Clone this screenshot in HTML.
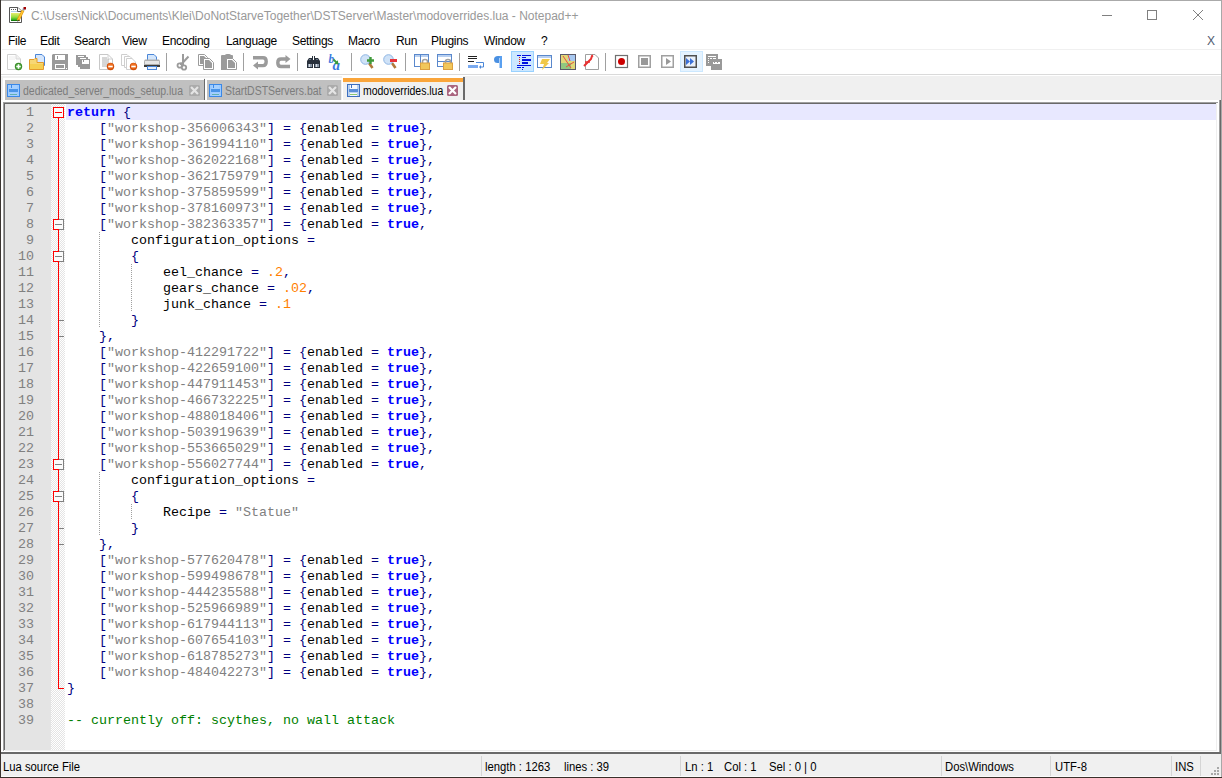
<!DOCTYPE html>
<html><head><meta charset="utf-8">
<style>
*{margin:0;padding:0;box-sizing:border-box}
html,body{width:1222px;height:778px;overflow:hidden;background:#fff;font-family:"Liberation Sans",sans-serif}
.a{position:absolute}
#win{position:absolute;left:0;top:0;width:1222px;height:778px;background:#fff}
.title{left:31px;top:9px;font-size:12px;color:#999;white-space:nowrap}
.menu{top:34px;font-size:12px;color:#000;white-space:nowrap;letter-spacing:-0.3px}
#tb{left:1px;top:50px;width:1220px;height:25px;background:#fff;border-bottom:1px solid #dadada}
#tabbar{left:1px;top:76px;width:1220px;height:24px;background:#f0f0f0}
.tabt{font-size:12px;white-space:nowrap;transform:scaleX(0.872);transform-origin:0 0;line-height:14px}
#ed{left:1px;top:100px;width:1220px;height:654px;background:#fff}
#edf{left:3px;top:102px;width:1217px;height:652px;border-top:2px solid #6d6d6d;border-left:2px solid #6d6d6d;border-bottom:2px solid #6d6d6d;border-right:0}
#lnm{left:5px;top:104px;width:46px;height:646px;background:#e4e4e4}
#fold{left:51px;top:104px;width:14px;height:646px;background:repeating-conic-gradient(#e8e8e8 0 25%,#fff 0 50%) 0 0/2px 2px}
#code{left:67px;top:105px;font-family:"Liberation Mono",monospace;font-size:13.333px;line-height:16px;white-space:pre;color:#000}
#nums{left:5px;top:105px;width:29px;text-align:right;font-family:"Liberation Mono",monospace;font-size:13.333px;line-height:16px;white-space:pre;color:#808080}
#curl{left:66px;top:104px;width:1150px;height:16px;background:#e8e8ff}
#sb{left:1px;top:754px;width:1220px;height:22px;background:#f0f0f0}
.st{top:760px;font-size:12px;line-height:14px;color:#000;white-space:nowrap;transform:scaleX(0.94);transform-origin:0 0}
.sep{top:756px;width:1px;height:20px;background:#d5d5d5}
.guide{width:1px;background:repeating-linear-gradient(#a0a0a0 0 1px,transparent 1px 2px)}
.k{color:#0000ff;font-weight:bold}
.s{color:#808080}
.o{color:#000080}
.n{color:#ff8000}
.c{color:#008000}
</style></head><body>
<div id="win">
<!-- window borders -->
<div class="a" style="left:0;top:0;width:1222px;height:1px;background:#aaa"></div>
<div class="a" style="left:0;top:0;width:1px;height:778px;background:#3a3430"></div>
<div class="a" style="left:1221px;top:0;width:1px;height:778px;background:#a8a8a8"></div>


<!-- title -->
<svg class="a" style="left:8px;top:6px" width="18" height="18">
<defs><linearGradient id="gg" x1="0" y1="0" x2="0" y2="1"><stop offset="0" stop-color="#e8ec70"/><stop offset="0.5" stop-color="#9ade40"/><stop offset="0.85" stop-color="#30b020"/><stop offset="1" stop-color="#005a00"/></linearGradient></defs>
<path d="M1.5 1.5H10L13.5 5V16.5H1.5Z" fill="#fff" stroke="#555" stroke-width="1"/>
<path d="M9.5 1.5V5.5H13.5" fill="#fff" stroke="#555" stroke-width="1"/>
<rect x="3" y="3" width="1" height="1" fill="#555"/><rect x="5" y="3" width="1" height="1" fill="#555"/><rect x="7" y="3" width="1" height="1" fill="#555"/>
<rect x="3" y="5" width="6" height="1" fill="#b8d0e8"/>
<rect x="3" y="7" width="9" height="8" fill="url(#gg)"/>
<path d="M10 14.5L15.2 4.2" stroke="#e89a10" stroke-width="2.8"/><path d="M10 14.5L15.2 4.2" stroke="#ffc830" stroke-width="1.4"/>
<path d="M9.2 16L10.2 13.6L11.4 14.3Z" fill="#333"/>
<rect x="14.5" y="2.5" width="2" height="2" fill="#90b0d0"/><rect x="15.5" y="1" width="2.5" height="2.5" fill="#a00000"/>
</svg>
<div class="a title">C:\Users\Nick\Documents\Klei\DoNotStarveTogether\DSTServer\Master\modoverrides.lua - Notepad++</div>
<div class="a" style="left:1102px;top:15px;width:10px;height:1px;background:#808080"></div>
<div class="a" style="left:1147px;top:10px;width:10px;height:10px;border:1px solid #808080"></div>
<svg class="a" style="left:1193px;top:10px" width="10" height="10"><path d="M0 0L10 10M10 0L0 10" stroke="#808080" stroke-width="1"/></svg>

<!-- menu -->
<div class="a menu" style="left:8px">File</div>
<div class="a menu" style="left:40px">Edit</div>
<div class="a menu" style="left:74px">Search</div>
<div class="a menu" style="left:122px">View</div>
<div class="a menu" style="left:162px">Encoding</div>
<div class="a menu" style="left:226px">Language</div>
<div class="a menu" style="left:292px">Settings</div>
<div class="a menu" style="left:348px">Macro</div>
<div class="a menu" style="left:396px">Run</div>
<div class="a menu" style="left:431px">Plugins</div>
<div class="a menu" style="left:484px">Window</div>
<div class="a menu" style="left:541px">?</div>
<div class="a menu" style="left:1207px;color:#505a70">X</div>
<div class="a" style="left:2px;top:49px;width:1219px;height:1px;background:#f0f0f0"></div>

<!-- toolbar -->
<div id="tb" class="a"></div>
<svg class="a" style="left:0;top:0" width="730" height="76"><g transform="translate(7,54)"><path d="M0.5 0.5H9L13.5 5V15.5H0.5Z" fill="#fff" stroke="#cfcfcf"/><path d="M9 0.5V5H13.5" fill="#f0f0f0" stroke="#d8d8d8"/>
<path d="M2 3H8M2 5H8" stroke="#ececec"/>
<circle cx="11.5" cy="12.5" r="3.7" fill="#3b8a2a"/><circle cx="11.5" cy="12.5" r="2.8" fill="#4aa83a"/><path d="M11.5 10.3V14.7M9.3 12.5H13.7" stroke="#fff" stroke-width="1.6"/></g><g transform="translate(29,54)"><path d="M6.5 0.5H13L15.5 3V11.5H6.5Z" fill="#d6e6fb" stroke="#4a86d8"/>
<path d="M0.5 5.5H5L6 4.5H8V8.5H14.5V15.5H0.5Z" fill="#f7d774" stroke="#e39a2c"/><path d="M1 10H14V15H1Z" fill="#f5cf52"/></g><g transform="translate(52,54)"><path d="M1 0H16V16H0V1Z" fill="#999"/><rect x="3" y="1" width="10" height="5" fill="#fff"/><rect x="5" y="2" width="1" height="3" fill="#999"/>
<rect x="3" y="10" width="10" height="5" fill="#fff"/><rect x="4" y="11" width="8" height="3" fill="#999"/><rect x="14" y="14" width="1" height="1" fill="#fff"/></g><g transform="translate(76,55)"><rect x="0" y="0" width="10" height="10" fill="#999"/><rect x="2" y="1" width="6" height="3" fill="#fff"/><rect x="2" y="2" width="10" height="10" fill="#999"/><rect x="4" y="3" width="6" height="3" fill="#fff"/><rect x="4" y="4" width="10" height="10" fill="#999"/><rect x="6" y="5" width="7" height="4" fill="#fff"/><rect x="7" y="5" width="1" height="2" fill="#999"/></g><g transform="translate(99,54)"><path d="M0.5 0.5H9L13.5 5V15.5H0.5Z" fill="#fff" stroke="#c8c8c8"/><path d="M9 0.5V5H13.5" fill="none" stroke="#d0d0d0"/>
<path d="M3 4H8M3 6H10M3 8H10M3 10H9M3 12H8" stroke="#9a9a9a" stroke-width="0.8"/>
<circle cx="11.5" cy="12.5" r="3.7" fill="#d2500a"/><circle cx="11.5" cy="12" r="2.7" fill="#f07020"/><rect x="9.3" y="11.7" width="4.4" height="1.6" fill="#fff"/></g><g transform="translate(121,54)"><path d="M0.5 0.5H6L8.5 3V11.5H0.5Z" fill="#fff" stroke="#cfcfcf"/><path d="M3.5 2.5H9L11.5 5V13.5H3.5Z" fill="#fff" stroke="#cfcfcf"/><path d="M5.5 4.5H11L14.5 8V15.5H5.5Z" fill="#fff" stroke="#cfcfcf"/>
<circle cx="12.5" cy="12.5" r="3.7" fill="#d2500a"/><circle cx="12.5" cy="12" r="2.7" fill="#f07020"/><rect x="10.3" y="11.7" width="4.4" height="1.6" fill="#fff"/></g><g transform="translate(144,54)"><path d="M3.5 0.5H10L12.5 3V7.5H3.5Z" fill="#d4e6fb" stroke="#4a86d8"/>
<path d="M1 5.5H15Q16 6 16 8V13H0V8Q0 6 1 5.5Z" fill="#b0b0b0"/><rect x="1" y="7" width="14" height="3" fill="#e6e6e6"/><rect x="0" y="11" width="16" height="2" fill="#3a3a3a"/>
<rect x="3.5" y="12.5" width="9" height="3" fill="#e8f0fb" stroke="#4a86d8"/></g><rect x="166" y="53" width="1" height="18" fill="#a0a0a0"/><rect x="243" y="53" width="1" height="18" fill="#a0a0a0"/><rect x="297" y="53" width="1" height="18" fill="#a0a0a0"/><rect x="351" y="53" width="1" height="18" fill="#a0a0a0"/><rect x="405" y="53" width="1" height="18" fill="#a0a0a0"/><rect x="459" y="53" width="1" height="18" fill="#a0a0a0"/><rect x="605" y="53" width="1" height="18" fill="#a0a0a0"/><g transform="translate(177,54)"><path d="M6 0V9M11.5 2.5L5 9.5" stroke="#9b9b9b" stroke-width="2"/><circle cx="2.7" cy="11.5" r="2.2" fill="none" stroke="#9b9b9b" stroke-width="1.8"/><circle cx="7" cy="13.5" r="2.2" fill="none" stroke="#9b9b9b" stroke-width="1.8"/><rect x="3" y="8.5" width="4" height="2.5" fill="#9b9b9b"/></g><g transform="translate(198,54)"><path d="M0.5 0.5H6.5L9.5 3.5V11.5H0.5Z" fill="#fff" stroke="#9b9b9b"/><path d="M2 2H6L8 4V10H2Z" fill="#9b9b9b"/>
<path d="M5.5 4.5H11.5L15.5 8.5V15.5H5.5Z" fill="#fff" stroke="#9b9b9b"/><path d="M7 6H11L14 9V14H7Z" fill="#9b9b9b"/></g><g transform="translate(221,54)"><path d="M0 2Q0 1 1 1H4Q4.5 0 6 0H8Q9.5 0 10 1H11Q12 1 12 2V16H0Z" fill="#9b9b9b"/><path d="M5.5 4.5H11.5L15.5 8.5V15.5H5.5Z" fill="#fff" stroke="#9b9b9b"/><path d="M7 6H11L14 9V14H7Z" fill="#9b9b9b"/></g><g transform="translate(253,56)"><path d="M0 1.8H10Q13.2 1.8 13.2 5.5Q13.2 9.6 10 9.6H4" fill="none" stroke="#9b9b9b" stroke-width="3.4"/><path d="M0 9.5L5 5.5V13.5Z" fill="#9b9b9b"/></g><g transform="translate(276,55)"><path d="M14 11.5H5Q1.8 11.5 1.8 7.7Q1.8 4 5 4H10" fill="none" stroke="#9b9b9b" stroke-width="3.4"/><path d="M14.5 4L9.5 0V8Z" fill="#9b9b9b"/></g><g transform="translate(307,56)"><path d="M2 2H5V0H6V2H6V12H0V5Z" fill="#29313c"/><path d="M11 2H8V0H7V2H7V12H13V5Z" fill="#29313c"/><rect x="5" y="4" width="3" height="4" fill="#29313c"/>
<rect x="1" y="8" width="4" height="3" fill="#8896a6"/><rect x="8" y="8" width="4" height="3" fill="#8896a6"/><rect x="2" y="8" width="1" height="3" fill="#d8dde4"/><rect x="9" y="8" width="1" height="3" fill="#d8dde4"/>
<rect x="2" y="3" width="2" height="1" fill="#6a7686"/><rect x="9" y="3" width="2" height="1" fill="#6a7686"/></g><g transform="translate(329,54)"><text x="-0.5" y="8.5" font-family="Liberation Serif" font-style="italic" font-weight="bold" font-size="11.5" fill="#3b7be0">b</text>
<text x="3.5" y="15.5" font-family="Liberation Serif" font-style="italic" font-weight="bold" font-size="15" fill="#3b7be0">a</text><path d="M4.5 5.5L8 9" stroke="#3a9a3a" stroke-width="1.8"/><path d="M9.5 10.5L5.2 9.8L8.8 6.2Z" fill="#3a9a3a"/></g><g transform="translate(360,54)"><path d="M9 9L12.5 14" stroke="#b07a3a" stroke-width="2.6"/><circle cx="5.5" cy="5.5" r="4.8" fill="#cfe2f7" stroke="#8fb6e4"/>
<path d="M10.5 3V10M7 6.5H14" stroke="#3f9a3a" stroke-width="2.4"/></g><g transform="translate(383,54)"><path d="M9 9L12.5 14" stroke="#b07a3a" stroke-width="2.6"/><circle cx="5.5" cy="5.5" r="4.8" fill="#cfe2f7" stroke="#8fb6e4"/>
<rect x="7" y="5" width="7" height="3" fill="#e8323a"/></g><g transform="translate(414,54)"><rect x="0.5" y="0.5" width="14" height="12" fill="#fff" stroke="#5a88cc"/><rect x="1" y="1" width="13" height="2" fill="#b9d0f0"/><path d="M6.5 1V12" stroke="#5a88cc"/><path d="M8.5 9.5V7.5Q8.5 5.5 11 5.5Q13.5 5.5 13.5 7.5V9.5" fill="none" stroke="#a0a0a0" stroke-width="1.6"/><rect x="6.5" y="9" width="9" height="6.5" fill="#f2c75a" stroke="#dca040"/></g><g transform="translate(437,54)"><rect x="0.5" y="0.5" width="14" height="12" fill="#fff" stroke="#5a88cc"/><rect x="1" y="1" width="13" height="2" fill="#b9d0f0"/><path d="M1 7.5H14" stroke="#5a88cc"/><path d="M8.5 9.5V7.5Q8.5 5.5 11 5.5Q13.5 5.5 13.5 7.5V9.5" fill="none" stroke="#a0a0a0" stroke-width="1.6"/><rect x="6.5" y="9" width="9" height="6.5" fill="#f2c75a" stroke="#dca040"/></g><g transform="translate(468,54)"><rect x="0" y="2" width="9" height="1" fill="#222"/><rect x="0" y="4" width="9" height="1" fill="#222"/><rect x="0" y="7" width="6" height="1" fill="#222"/>
<rect x="0" y="11" width="10" height="3" fill="#7aaaf0"/><path d="M8 8.5H15.5V13H13" fill="none" stroke="#4a86d8"/><path d="M11 13L13 11V15Z" fill="#4a86d8"/></g><g transform="translate(494,56)"><path d="M4 0H8V12H6V2H5V7H3.5Q0 7 0 3.5Q0 0 4 0Z" fill="#4a90e2"/><rect x="5.5" y="0" width="2.5" height="12" fill="#5aa0f0"/></g><rect x="511.5" y="51.5" width="22" height="20" fill="#cce8ff" stroke="#99d1ff"/><g transform="translate(517,55)"><rect x="0" y="0" width="4" height="1" fill="#0010e0"/><rect x="5" y="0" width="9" height="1" fill="#0010e0"/><rect x="5" y="2" width="4" height="1" fill="#0010e0"/>
<rect x="5" y="4" width="9" height="2" fill="#0010e0"/><rect x="5" y="7" width="6" height="2" fill="#0010e0"/><rect x="0" y="10" width="14" height="1" fill="#0010e0"/>
<rect x="0" y="12" width="4" height="1" fill="#0010e0"/><rect x="5" y="12" width="2" height="1" fill="#0010e0"/><rect x="5" y="14" width="1" height="1" fill="#0010e0"/>
<rect x="2" y="2" width="1" height="1" fill="#e02020"/><rect x="2" y="4" width="1" height="1" fill="#e02020"/><rect x="2" y="6" width="1" height="1" fill="#e02020"/><rect x="2" y="8" width="1" height="1" fill="#e02020"/></g><g transform="translate(537,55)"><rect x="0.5" y="0.5" width="14" height="12" fill="#fff" stroke="#5a88cc"/><rect x="1" y="1" width="13" height="2" fill="#b9d0f0"/>
<path d="M5 4H13L10 8H12L5 15L7 9H3Z" fill="#f0c848"/></g><g transform="translate(560,54)"><rect x="0.5" y="0.5" width="15" height="15" fill="#e0d878" stroke="#5a5a6a"/><rect x="8" y="1" width="7" height="6" fill="#a8c8f0"/><rect x="1" y="9" width="10" height="6" fill="#90c880"/>
<path d="M3 2L11 14M6 13L14 8M8 1L10 7" stroke="#e85040" stroke-width="1"/></g><g transform="translate(583,54)"><path d="M2.5 0.5H12L15.5 4V15.5H2.5Z" fill="#fff" stroke="#a0a0a0"/><path d="M1 12L4 9L8 5L9 2L10 1.5" fill="none" stroke="#e83030" stroke-width="2"/><path d="M2 8H7" stroke="#e83030" stroke-width="1.5"/></g><g transform="translate(615,55)"><rect x="0.5" y="0.5" width="12" height="12" fill="#fff" stroke="#707070" stroke-width="1.2"/><circle cx="6.5" cy="6.5" r="3.5" fill="#cc0000"/></g><g transform="translate(638,55)"><rect x="0.75" y="0.75" width="11.5" height="11.5" fill="#fff" stroke="#a0a0a0" stroke-width="1.5"/><rect x="3" y="3" width="7" height="7" fill="#999"/></g><g transform="translate(661,55)"><rect x="0.75" y="0.75" width="11.5" height="11.5" fill="#fff" stroke="#a0a0a0" stroke-width="1.5"/><path d="M5 3L10 6.5L5 10Z" fill="#999"/></g><rect x="680.5" y="51.5" width="22" height="20" fill="#e5f3ff" stroke="#cce8ff"/><g transform="translate(684,55)"><rect x="0.75" y="0.75" width="11.5" height="11.5" fill="#e8f0fa" stroke="#505050" stroke-width="1.5"/><path d="M2 3L6 6.5L2 10Z" fill="#3a70d8"/><path d="M6 3L10 6.5L6 10Z" fill="#3a70d8"/></g><g transform="translate(706,54)"><rect x="0" y="0" width="12" height="12" fill="#999"/><rect x="2" y="2" width="8" height="1" fill="#fff"/><rect x="2" y="4" width="1" height="1" fill="#fff"/><rect x="4" y="4" width="2" height="1" fill="#fff"/><rect x="7" y="4" width="3" height="1" fill="#fff"/>
<rect x="2" y="6" width="1" height="1" fill="#fff"/><rect x="2" y="8" width="1" height="1" fill="#fff"/><rect x="5" y="5" width="11" height="11" fill="#999" stroke="#fff" stroke-width="0"/><rect x="7" y="8" width="7" height="2" fill="#fff"/><rect x="8" y="8" width="1" height="1" fill="#999"/><rect x="11" y="8" width="1" height="1" fill="#999"/></g></svg>

<!-- tabs -->
<div id="tabbar" class="a"></div>
<div class="a" style="left:1px;top:100px;width:1220px;height:2px;background:#fff"></div>
<svg class="a" style="left:0;top:74px" width="480" height="30"><rect x="3" y="4" width="201" height="2" fill="#ffffff"/><rect x="3" y="4" width="2" height="22" fill="#ffffff"/><rect x="5" y="6" width="199" height="20" fill="#c0c0c0"/><rect x="204" y="5" width="1" height="21" fill="#6a6a6a"/><rect x="205" y="4" width="137" height="2" fill="#ffffff"/><rect x="205" y="4" width="2" height="22" fill="#ffffff"/><rect x="207" y="6" width="134" height="20" fill="#c0c0c0"/><rect x="342" y="2" width="121" height="2" fill="#ffffff"/><rect x="342" y="2" width="1" height="26" fill="#ffffff"/><rect x="343" y="4" width="120" height="4" fill="#faa53a"/><rect x="343" y="8" width="120" height="1" fill="#f6f0e8"/><rect x="343" y="9" width="120" height="19" fill="#f0f0f0"/><rect x="463" y="3" width="2" height="23" fill="#6a6a6a"/><g transform="translate(0,-74)"><g transform="translate(7,84)" shape-rendering="crispEdges"><rect x="0" y="0" width="13" height="13" rx="1" fill="#3a88e8"/><rect x="1" y="1" width="11" height="11" fill="#9ccaff"/><rect x="3" y="1" width="7" height="4" fill="#a6d0ff"/><rect x="4" y="1" width="1" height="3" fill="#3a88e8"/><rect x="2" y="5" width="9" height="3" fill="#4a94e8"/><rect x="3" y="9" width="7" height="3" fill="#a6d0ff"/><rect x="3" y="10" width="7" height="1" fill="#62b0b0"/></g><g transform="translate(209,84)" shape-rendering="crispEdges"><rect x="0" y="0" width="13" height="13" rx="1" fill="#3a88e8"/><rect x="1" y="1" width="11" height="11" fill="#9ccaff"/><rect x="3" y="1" width="7" height="4" fill="#a6d0ff"/><rect x="4" y="1" width="1" height="3" fill="#3a88e8"/><rect x="2" y="5" width="9" height="3" fill="#4a94e8"/><rect x="3" y="9" width="7" height="3" fill="#a6d0ff"/><rect x="3" y="10" width="7" height="1" fill="#62b0b0"/></g><g transform="translate(347,84)" shape-rendering="crispEdges"><rect x="0" y="0" width="13" height="13" rx="1" fill="#3d6fc0"/><rect x="1" y="1" width="11" height="11" fill="#b8d0ee"/><rect x="3" y="1" width="7" height="4" fill="#f4f8fd"/><rect x="4" y="1" width="1" height="3" fill="#3d6fc0"/><rect x="2" y="5" width="9" height="3" fill="#5a8ed8"/><rect x="3" y="9" width="7" height="3" fill="#f4f8fd"/><rect x="3" y="10" width="7" height="1" fill="#8cc870"/></g><g transform="translate(189,85)"><rect x="0" y="0" width="11" height="11" rx="1.5" fill="#ababab"/><path d="M2.8 2.8L8.2 8.2M8.2 2.8L2.8 8.2" stroke="#e4e4e4" stroke-width="2.2" stroke-linecap="square"/></g><g transform="translate(327,85)"><rect x="0" y="0" width="11" height="11" rx="1.5" fill="#ababab"/><path d="M2.8 2.8L8.2 8.2M8.2 2.8L2.8 8.2" stroke="#e4e4e4" stroke-width="2.2" stroke-linecap="square"/></g><g transform="translate(447,85)"><rect x="0" y="0" width="11" height="11" rx="1.5" fill="#a9647e"/><path d="M2.8 2.8L8.2 8.2M8.2 2.8L2.8 8.2" stroke="#fff" stroke-width="2.2" stroke-linecap="square"/></g></g></svg><div class="a tabt" style="left:23px;top:84px;color:#7c7c7c">dedicated_server_mods_setup.lua</div><div class="a tabt" style="left:225px;top:84px;color:#7c7c7c">StartDSTServers.bat</div><div class="a tabt" style="left:363px;top:84px;color:#000">modoverrides.lua</div>

<!-- editor -->
<div id="ed" class="a"></div>
<div class="a" style="left:3px;top:102px;width:1215px;height:1px;background:#a0a0a0"></div>
<div class="a" style="left:4px;top:103px;width:1213px;height:1px;background:#696969"></div>
<div class="a" style="left:3px;top:102px;width:1px;height:649px;background:#a0a0a0"></div>
<div class="a" style="left:4px;top:103px;width:1px;height:647px;background:#696969"></div>
<div class="a" style="left:1216px;top:103px;width:1px;height:648px;background:#efefef"></div>
<div class="a" style="left:5px;top:750px;width:1212px;height:1px;background:#efefef"></div>
<div class="a" style="left:1219px;top:100px;width:1px;height:652px;background:#a0a0a0"></div>
<div class="a" style="left:1220px;top:100px;width:1px;height:652px;background:#696969"></div>
<div class="a" style="left:1px;top:752px;width:1220px;height:2px;background:#6a6a6a"></div>
<div id="lnm" class="a"></div>
<div id="fold" class="a"></div>
<div id="curl" class="a"></div>
<svg class="a" style="left:51px;top:104px" width="14" height="646" shape-rendering="crispEdges"><defs><pattern id="ck" width="2" height="2" patternUnits="userSpaceOnUse"><rect width="2" height="2" fill="#fff"/><rect width="1" height="1" fill="#e4e4e4"/><rect x="1" y="1" width="1" height="1" fill="#e4e4e4"/></pattern></defs><rect width="14" height="646" fill="url(#ck)"/><rect x="7" y="14" width="1" height="571" fill="#ff0000"/><rect x="2" y="3" width="11" height="11" fill="#f6f6f6"/><rect x="3" y="4" width="9" height="9" fill="#fbfbfb"/><rect x="2" y="3" width="1" height="11" fill="#ff0000"/><rect x="2" y="3" width="6" height="1" fill="#ff0000"/><rect x="2" y="13" width="6" height="1" fill="#ff0000"/><rect x="8" y="3" width="5" height="1" fill="#ff0000"/><rect x="8" y="13" width="5" height="1" fill="#ff0000"/><rect x="12" y="3" width="1" height="11" fill="#ff0000"/><rect x="4" y="8" width="7" height="1" fill="#ff0000"/><rect x="2" y="115" width="11" height="11" fill="#f6f6f6"/><rect x="3" y="116" width="9" height="9" fill="#fbfbfb"/><rect x="2" y="115" width="1" height="11" fill="#ff0000"/><rect x="2" y="115" width="6" height="1" fill="#ff0000"/><rect x="2" y="125" width="6" height="1" fill="#ff0000"/><rect x="8" y="115" width="5" height="1" fill="#808080"/><rect x="8" y="125" width="5" height="1" fill="#808080"/><rect x="12" y="115" width="1" height="11" fill="#808080"/><rect x="4" y="120" width="7" height="1" fill="#808080"/><rect x="2" y="147" width="11" height="11" fill="#f6f6f6"/><rect x="3" y="148" width="9" height="9" fill="#fbfbfb"/><rect x="2" y="147" width="1" height="11" fill="#ff0000"/><rect x="2" y="147" width="6" height="1" fill="#ff0000"/><rect x="2" y="157" width="6" height="1" fill="#ff0000"/><rect x="8" y="147" width="5" height="1" fill="#808080"/><rect x="8" y="157" width="5" height="1" fill="#808080"/><rect x="12" y="147" width="1" height="11" fill="#808080"/><rect x="4" y="152" width="7" height="1" fill="#808080"/><rect x="2" y="355" width="11" height="11" fill="#f6f6f6"/><rect x="3" y="356" width="9" height="9" fill="#fbfbfb"/><rect x="2" y="355" width="1" height="11" fill="#ff0000"/><rect x="2" y="355" width="6" height="1" fill="#ff0000"/><rect x="2" y="365" width="6" height="1" fill="#ff0000"/><rect x="8" y="355" width="5" height="1" fill="#808080"/><rect x="8" y="365" width="5" height="1" fill="#808080"/><rect x="12" y="355" width="1" height="11" fill="#808080"/><rect x="4" y="360" width="7" height="1" fill="#808080"/><rect x="2" y="387" width="11" height="11" fill="#f6f6f6"/><rect x="3" y="388" width="9" height="9" fill="#fbfbfb"/><rect x="2" y="387" width="1" height="11" fill="#ff0000"/><rect x="2" y="387" width="6" height="1" fill="#ff0000"/><rect x="2" y="397" width="6" height="1" fill="#ff0000"/><rect x="8" y="387" width="5" height="1" fill="#808080"/><rect x="8" y="397" width="5" height="1" fill="#808080"/><rect x="12" y="387" width="1" height="11" fill="#808080"/><rect x="4" y="392" width="7" height="1" fill="#808080"/><rect x="8" y="216" width="5" height="1" fill="#808080"/><rect x="8" y="232" width="5" height="1" fill="#808080"/><rect x="8" y="424" width="5" height="1" fill="#808080"/><rect x="8" y="440" width="5" height="1" fill="#808080"/><rect x="7" y="584" width="6" height="1" fill="#ff0000"/></svg>
<div class="a guide" style="left:99px;top:232px;height:96px"></div>
<div class="a guide" style="left:131px;top:264px;height:48px"></div>
<div class="a guide" style="left:99px;top:472px;height:64px"></div>
<div class="a guide" style="left:131px;top:504px;height:16px"></div>
<div id="nums" class="a">1
2
3
4
5
6
7
8
9
10
11
12
13
14
15
16
17
18
19
20
21
22
23
24
25
26
27
28
29
30
31
32
33
34
35
36
37
38
39</div>
<div id="code" class="a"><span class="k">return</span> <span class="o">{</span>
    <span class="o">[</span><span class="s">&quot;workshop-356006343&quot;</span><span class="o">]</span> <span class="o">=</span> <span class="o">{</span>enabled <span class="o">=</span> <span class="k">true</span><span class="o">},</span>
    <span class="o">[</span><span class="s">&quot;workshop-361994110&quot;</span><span class="o">]</span> <span class="o">=</span> <span class="o">{</span>enabled <span class="o">=</span> <span class="k">true</span><span class="o">},</span>
    <span class="o">[</span><span class="s">&quot;workshop-362022168&quot;</span><span class="o">]</span> <span class="o">=</span> <span class="o">{</span>enabled <span class="o">=</span> <span class="k">true</span><span class="o">},</span>
    <span class="o">[</span><span class="s">&quot;workshop-362175979&quot;</span><span class="o">]</span> <span class="o">=</span> <span class="o">{</span>enabled <span class="o">=</span> <span class="k">true</span><span class="o">},</span>
    <span class="o">[</span><span class="s">&quot;workshop-375859599&quot;</span><span class="o">]</span> <span class="o">=</span> <span class="o">{</span>enabled <span class="o">=</span> <span class="k">true</span><span class="o">},</span>
    <span class="o">[</span><span class="s">&quot;workshop-378160973&quot;</span><span class="o">]</span> <span class="o">=</span> <span class="o">{</span>enabled <span class="o">=</span> <span class="k">true</span><span class="o">},</span>
    <span class="o">[</span><span class="s">&quot;workshop-382363357&quot;</span><span class="o">]</span> <span class="o">=</span> <span class="o">{</span>enabled <span class="o">=</span> <span class="k">true</span><span class="o">,</span>
        configuration_options <span class="o">=</span>
        <span class="o">{</span>
            eel_chance <span class="o">=</span> <span class="n">.2</span><span class="o">,</span>
            gears_chance <span class="o">=</span> <span class="n">.02</span><span class="o">,</span>
            junk_chance <span class="o">=</span> <span class="n">.1</span>
        <span class="o">}</span>
    <span class="o">},</span>
    <span class="o">[</span><span class="s">&quot;workshop-412291722&quot;</span><span class="o">]</span> <span class="o">=</span> <span class="o">{</span>enabled <span class="o">=</span> <span class="k">true</span><span class="o">},</span>
    <span class="o">[</span><span class="s">&quot;workshop-422659100&quot;</span><span class="o">]</span> <span class="o">=</span> <span class="o">{</span>enabled <span class="o">=</span> <span class="k">true</span><span class="o">},</span>
    <span class="o">[</span><span class="s">&quot;workshop-447911453&quot;</span><span class="o">]</span> <span class="o">=</span> <span class="o">{</span>enabled <span class="o">=</span> <span class="k">true</span><span class="o">},</span>
    <span class="o">[</span><span class="s">&quot;workshop-466732225&quot;</span><span class="o">]</span> <span class="o">=</span> <span class="o">{</span>enabled <span class="o">=</span> <span class="k">true</span><span class="o">},</span>
    <span class="o">[</span><span class="s">&quot;workshop-488018406&quot;</span><span class="o">]</span> <span class="o">=</span> <span class="o">{</span>enabled <span class="o">=</span> <span class="k">true</span><span class="o">},</span>
    <span class="o">[</span><span class="s">&quot;workshop-503919639&quot;</span><span class="o">]</span> <span class="o">=</span> <span class="o">{</span>enabled <span class="o">=</span> <span class="k">true</span><span class="o">},</span>
    <span class="o">[</span><span class="s">&quot;workshop-553665029&quot;</span><span class="o">]</span> <span class="o">=</span> <span class="o">{</span>enabled <span class="o">=</span> <span class="k">true</span><span class="o">},</span>
    <span class="o">[</span><span class="s">&quot;workshop-556027744&quot;</span><span class="o">]</span> <span class="o">=</span> <span class="o">{</span>enabled <span class="o">=</span> <span class="k">true</span><span class="o">,</span>
        configuration_options <span class="o">=</span>
        <span class="o">{</span>
            Recipe <span class="o">=</span> <span class="s">&quot;Statue&quot;</span>
        <span class="o">}</span>
    <span class="o">},</span>
    <span class="o">[</span><span class="s">&quot;workshop-577620478&quot;</span><span class="o">]</span> <span class="o">=</span> <span class="o">{</span>enabled <span class="o">=</span> <span class="k">true</span><span class="o">},</span>
    <span class="o">[</span><span class="s">&quot;workshop-599498678&quot;</span><span class="o">]</span> <span class="o">=</span> <span class="o">{</span>enabled <span class="o">=</span> <span class="k">true</span><span class="o">},</span>
    <span class="o">[</span><span class="s">&quot;workshop-444235588&quot;</span><span class="o">]</span> <span class="o">=</span> <span class="o">{</span>enabled <span class="o">=</span> <span class="k">true</span><span class="o">},</span>
    <span class="o">[</span><span class="s">&quot;workshop-525966989&quot;</span><span class="o">]</span> <span class="o">=</span> <span class="o">{</span>enabled <span class="o">=</span> <span class="k">true</span><span class="o">},</span>
    <span class="o">[</span><span class="s">&quot;workshop-617944113&quot;</span><span class="o">]</span> <span class="o">=</span> <span class="o">{</span>enabled <span class="o">=</span> <span class="k">true</span><span class="o">},</span>
    <span class="o">[</span><span class="s">&quot;workshop-607654103&quot;</span><span class="o">]</span> <span class="o">=</span> <span class="o">{</span>enabled <span class="o">=</span> <span class="k">true</span><span class="o">},</span>
    <span class="o">[</span><span class="s">&quot;workshop-618785273&quot;</span><span class="o">]</span> <span class="o">=</span> <span class="o">{</span>enabled <span class="o">=</span> <span class="k">true</span><span class="o">},</span>
    <span class="o">[</span><span class="s">&quot;workshop-484042273&quot;</span><span class="o">]</span> <span class="o">=</span> <span class="o">{</span>enabled <span class="o">=</span> <span class="k">true</span><span class="o">},</span>
<span class="o">}</span>

<span class="c">-- currently off: scythes, no wall attack</span></div>

<!-- status -->
<div id="sb" class="a"></div>
<div class="a st" style="left:3px">Lua source File</div>
<div class="a sep" style="left:481px"></div>
<div class="a st" style="left:485px">length : 1263</div>
<div class="a st" style="left:564px">lines : 39</div>
<div class="a sep" style="left:680px"></div>
<div class="a st" style="left:685px">Ln : 1</div>
<div class="a st" style="left:724px">Col : 1</div>
<div class="a st" style="left:769px">Sel : 0 | 0</div>
<div class="a sep" style="left:941px"></div>
<div class="a st" style="left:945px">Dos\Windows</div>
<div class="a sep" style="left:1050px"></div>
<div class="a st" style="left:1055px">UTF-8</div>
<div class="a sep" style="left:1171px"></div>
<div class="a st" style="left:1175px">INS</div>
<div class="a sep" style="left:1200px"></div>
<svg class="a" style="left:1208px;top:764px" width="12" height="12" shape-rendering="crispEdges"><g fill="#a8a8a8"><rect x="9" y="3" width="2" height="2"/><rect x="6" y="6" width="2" height="2"/><rect x="9" y="6" width="2" height="2"/><rect x="3" y="9" width="2" height="2"/><rect x="6" y="9" width="2" height="2"/><rect x="9" y="9" width="2" height="2"/></g></svg>
<div class="a" style="left:1px;top:776px;width:1220px;height:1px;background:#fbfbfb"></div>
<div class="a" style="left:0;top:777px;width:1222px;height:1px;background:#3a302a"></div>
</div>
</body></html>
